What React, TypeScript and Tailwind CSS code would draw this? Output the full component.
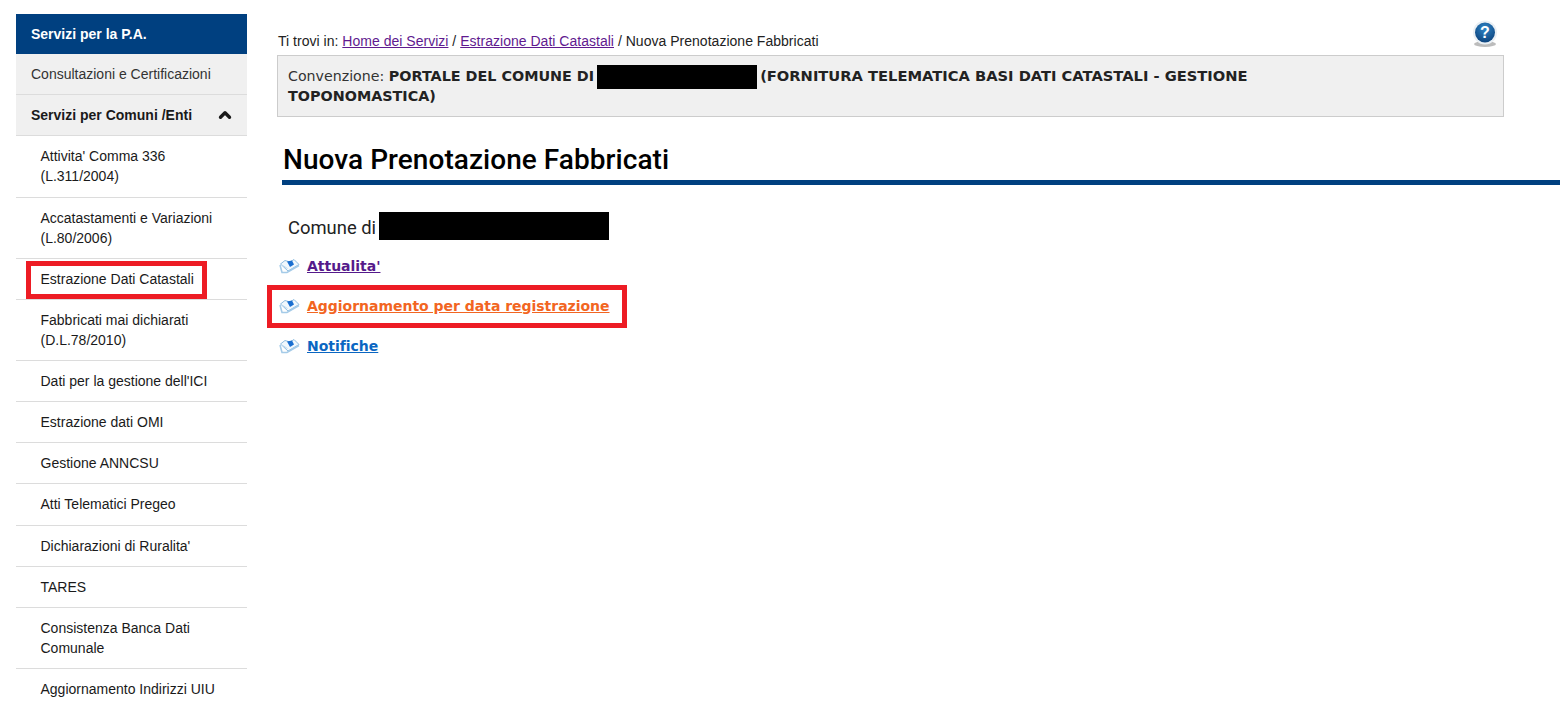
import type { ReactNode } from "react";
import { ChevronUp } from "lucide-react";

const voci: { label: ReactNode; evidenziata?: boolean; extra?: string }[] = [
  { label: <>Attivita' Comma 336<br />(L.311/2004)</>, extra: "pb-[10.7px]" },
  { label: <>Accatastamenti e Variazioni<br />(L.80/2006)</> },
  { label: "Estrazione Dati Catastali", evidenziata: true, extra: "pb-[9.5px]" },
  { label: <>Fabbricati mai dichiarati<br />(D.L.78/2010)</> },
  { label: "Dati per la gestione dell'ICI" },
  { label: "Estrazione dati OMI" },
  { label: "Gestione ANNCSU" },
  { label: "Atti Telematici Pregeo" },
  { label: "Dichiarazioni di Ruralita'" },
  { label: "TARES" },
  { label: <>Consistenza Banca Dati<br />Comunale</> },
  { label: "Aggiornamento Indirizzi UIU" },
];

function BookIcon() {
  return (
    <svg width="21" height="16" viewBox="0 0 21 16" className="shrink-0">
      <path d="M1.5 6 L6 2.5 L11 4 L15 1.5 L20 6.5 L9 13 Z" fill="#f1f8fd" stroke="#8fbde0" strokeWidth="1" />
      <path d="M1 7 L3 14.5 L8 14.5 L20 7.5" fill="none" stroke="#a5cbe8" strokeWidth="1.6" />
      <path d="M8 3.5 L13 2.5 L15 6.5 L11 9 Z" fill="#1a6fd0" />
      <path d="M3 7 L8.5 10.5" stroke="#bcd9ee" strokeWidth="1" />
    </svg>
  );
}

function HelpIcon() {
  return (
    <svg width="26" height="28" viewBox="0 0 26 28">
      <defs>
        <radialGradient id="globo" cx="50%" cy="30%" r="75%">
          <stop offset="0%" stopColor="#2f86c8" />
          <stop offset="100%" stopColor="#0b3f78" />
        </radialGradient>
      </defs>
      <ellipse cx="13" cy="24" rx="11" ry="3" fill="#8f8f8f" opacity="0.6" />
      <circle cx="13" cy="12.5" r="12" fill="#e9eff4" />
      <circle cx="13" cy="12.5" r="10" fill="url(#globo)" />
      <text x="13" y="18" textAnchor="middle" fontSize="16" fontWeight="700" fill="#ffffff" fontFamily="'Liberation Sans', sans-serif">?</text>
    </svg>
  );
}

function LinkLibro({ colore, children }: { colore: string; children: ReactNode }) {
  return (
    <div className="flex h-10 items-center gap-[7px] pl-[2px]">
      <BookIcon />
      <a href="#" className={`text-[14px] font-bold tracking-[-0.02px] underline ${colore}`}>
        {children}
      </a>
    </div>
  );
}

export default function App() {
  return (
    <div className="flex h-[709px] w-[1564px] overflow-hidden bg-white font-['Liberation_Sans',Arial,sans-serif] text-[14px] text-[#1a1a1a]">
      {/* Sidebar */}
      <aside className="ml-4 mt-[14px] w-[231px] shrink-0">
        <div className="flex h-10 items-center bg-[#004080] pl-[15px] font-bold text-white">Servizi per la P.A.</div>
        <div className="flex h-[41px] items-center border-b border-[#dcdcdc] bg-[#f0f0f0] pl-[15px] text-[#333]">
          Consultazioni e Certificazioni
        </div>
        <div className="flex h-[41px] items-center justify-between border-b border-[#dcdcdc] bg-[#f0f0f0] pl-[15px] pr-[13px] font-bold">
          Servizi per Comuni /Enti
          <ChevronUp size={18} strokeWidth={4.5} className="text-[#1a1a1a]" />
        </div>
        {voci.map((v, i) => (
          <div
            key={i}
            className={`relative border-b border-[#dcdcdc] py-[10.1px] pl-[24.5px] pr-2 leading-5 last:border-b-0 ${v.extra ?? ""}`}
          >
            {v.label}
            {v.evidenziata && (
              <div className="absolute bottom-0 left-[10px] top-[2px] w-[181px] border-[5px] border-[#ed1c24]" />
            )}
          </div>
        ))}
      </aside>

      {/* Contenuto */}
      <main className="ml-[30px] min-w-0 flex-1">
        <div className="mt-[32px] flex h-[23px] w-[1227px] items-start justify-between">
          <p className="ml-[1px] leading-[18px] tracking-[0.02px] text-[#222]">
            Ti trovi in: <a href="#" className="text-[#5f1a8f] underline">Home dei Servizi</a> /{" "}
            <a href="#" className="text-[#5f1a8f] underline">Estrazione Dati Catastali</a> / Nuova Prenotazione Fabbricati
          </p>
          <div className="-mt-[12px] mr-[6px]">
            <HelpIcon />
          </div>
        </div>
        <div className="w-[1227px] border border-[#cccccc] bg-[#f0f0f0] px-[10px] py-[10px] font-['DejaVu_Sans',Verdana,sans-serif] text-[14.2px] leading-5 text-[#333]">
          Convenzione: <b className="text-[14.35px] text-[#222]">PORTALE DEL COMUNE DI</b>
          <span className="-my-[4px] ml-[3px] mr-[3px] inline-block h-6 w-[160px] bg-black align-middle" />
          <b className="text-[14.68px] text-[#222]">(FORNITURA TELEMATICA BASI DATI CATASTALI - GESTIONE</b>
          <br />
          <b className="text-[14.35px] text-[#222]">TOPONOMASTICA)</b>
        </div>

        <h1 className="ml-[5px] mr-1 mt-[25px] border-b-[5px] border-[#004080] pb-[2px] pl-[1px] font-['Roboto',sans-serif] text-[28px] font-medium leading-[36px] tracking-[0.05px] text-black">
          Nuova Prenotazione Fabbricati
        </h1>

        <div className="ml-[11px] mt-[27px] flex h-[28px] items-center gap-[3px] font-['Roboto',sans-serif] text-[18.4px] text-[#222]">
          <span className="pt-[3px]">Comune di</span>
          <span className="h-[28px] w-[230px] bg-black" />
        </div>

        <div className="mt-[6px] font-['DejaVu_Sans',Verdana,sans-serif]">
          <LinkLibro colore="text-[#551a8b]">Attualita'</LinkLibro>
          <div className="relative">
            <LinkLibro colore="text-[#f26522]">Aggiornamento per data registrazione</LinkLibro>
            <div className="absolute -left-[10px] -top-[1px] h-[43px] w-[360px] border-[5px] border-[#ed1c24]" />
          </div>
          <LinkLibro colore="text-[#0a66c2]">Notifiche</LinkLibro>
        </div>
      </main>
    </div>
  );
}
